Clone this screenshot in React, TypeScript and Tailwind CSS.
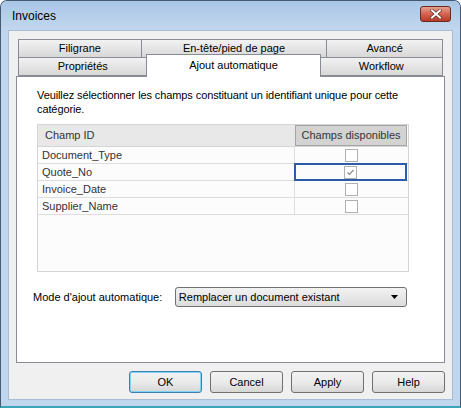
import { useState } from 'react';

const font = { fontFamily: '"Liberation Sans", Arial, sans-serif' };

const rows = ['Document_Type', 'Quote_No', 'Invoice_Date', 'Supplier_Name'];

function Tab({ label, w }: { label: string; w: string }) {
  return (
    <div
      className={`${w} h-[19px] flex items-center justify-center border border-[#898c95] bg-gradient-to-b from-[#f2f2f2] to-[#d8d8d8] text-[11px] text-black -ml-px first:ml-0`}
    >
      {label}
    </div>
  );
}

function Checkbox({ checked }: { checked: boolean }) {
  return (
    <div className="w-[13px] h-[13px] border border-[#b0b0b0] bg-white flex items-center justify-center">
      {checked && (
        <svg width="9" height="9" viewBox="0 0 9 9">
          <path d="M1.5 4.5 L3.5 6.5 L7.5 2" fill="none" stroke="#8a8a8a" strokeWidth="1.2" />
        </svg>
      )}
    </div>
  );
}

function Button({ label, primary }: { label: string; primary?: boolean }) {
  return (
    <button
      className={`w-[73px] h-[22px] rounded-[3px] border text-[11px] text-black bg-gradient-to-b from-[#f2f2f2] via-[#ebebeb] to-[#d6d6d6] ${
        primary ? 'border-[#3c7fb1] shadow-[inset_0_0_0_1px_#7fd3f5]' : 'border-[#707070]'
      }`}
    >
      {label}
    </button>
  );
}

export default function App() {
  const [selected] = useState(1);

  return (
    <div className="w-[461px] h-[408px] bg-[#c0d6ee] border border-[#45596f] border-b-2 border-b-[#3aa6b8] rounded-t-[7px] flex flex-col" style={font}>
      {/* Title bar */}
      <div className="h-[29px] flex items-center justify-between pl-[11px] pr-[9px] bg-gradient-to-b from-[#a9c6e6] to-[#c2d7ee] rounded-t-[6px]">
        <span className="text-[12px] text-black">Invoices</span>
        <div className="w-[31px] h-[16px] -mt-[3px] rounded-[3px] border border-[#6b2a22] bg-gradient-to-b from-[#e5a08c] via-[#d4634f] to-[#b73a27] flex items-center justify-center">
          <svg width="12" height="10" viewBox="0 0 12 10">
            <path d="M2 1.5 L10 8.5 M10 1.5 L2 8.5" stroke="#5a2b26" strokeWidth="3.4" strokeLinecap="square" />
            <path d="M2 1.5 L10 8.5 M10 1.5 L2 8.5" stroke="#ffffff" strokeWidth="2" strokeLinecap="square" />
          </svg>
        </div>
      </div>

      {/* Client area */}
      <div className="mx-[7px] h-[370px] bg-[#f0f0f0] border border-[#a8bdd4] flex flex-col">
        <div className="pt-[8px] px-[7px]">
          {/* Tabs */}
          <div className="px-[2px] flex">
            <Tab label="Filigrane" w="w-[124px]" />
            <Tab label="En-tête/pied de page" w="w-[187px]" />
            <Tab label="Avancé" w="w-[117px]" />
          </div>
          <div className="px-[2px] flex -mt-px items-end">
            <Tab label="Propriétés" w="w-[130px]" />
            <div className="relative z-10 w-[175px] h-[23px] -mb-px -mt-[3px] bg-white border border-b-0 border-[#898c95] text-[11px] text-black flex justify-center pt-[2px] -ml-px">
              Ajout automatique
            </div>
            <Tab label="Workflow" w="w-[124px]" />
          </div>

          {/* Panel */}
          <div className="h-[287px] bg-white border border-[#898c95] pl-[20px] pr-[37px] pt-[11px]">
            <p className="text-[11px] leading-[14px] text-black tracking-[-0.1px]">
              Veuillez sélectionner les champs constituant un identifiant unique pour cette catégorie.
            </p>

            <div className="mt-[8px] w-[372px] h-[148px] border border-[#d5d5d5] bg-[#fcfcfc]">
              <div className="flex h-[22px] border-b border-[#d5d5d5]">
                <div className="w-[257px] bg-[#e8e8e8] text-[11px] text-[#333] flex items-center pl-[7px]">Champ ID</div>
                <div className="w-[112px] bg-[#d3d3d3] border border-[#a5a5a5] text-[11px] text-[#333] flex items-center justify-center">
                  Champs disponibles
                </div>
              </div>
              {rows.map((r, i) => (
                <div key={r} className="flex h-[17px] border-b border-[#dedede]">
                  <div className="w-[257px] border-r border-[#dedede] text-[11px] text-[#333] flex items-center pl-[4px]">{r}</div>
                  <div
                    className={`w-[112px] flex items-center justify-center ${
                      i === selected ? 'border-2 border-[#2b5ca8] -my-px -ml-px w-[113px]' : ''
                    }`}
                  >
                    <Checkbox checked={i === selected} />
                  </div>
                </div>
              ))}
            </div>

            <div className="mt-[15px] -ml-[4px] flex items-center">
              <span className="w-[143px] text-[11px] text-black">Mode d'ajout automatique:</span>
              <div className="w-[234px] h-[20px] rounded-[3px] border border-[#707070] bg-gradient-to-b from-[#f2f2f2] to-[#dcdcdc] flex items-center justify-between pl-[3px] pr-[8px]">
                <span className="text-[11px] text-black">Remplacer un document existant</span>
                <svg width="7" height="4" viewBox="0 0 7 4">
                  <path d="M0 0 H7 L3.5 4 Z" fill="#000" />
                </svg>
              </div>
            </div>
          </div>
        </div>

        {/* Buttons */}
        <div className="flex justify-end gap-[8px] pr-[7px] mt-[8px]">
          <Button label="OK" primary />
          <Button label="Cancel" />
          <Button label="Apply" />
          <Button label="Help" />
        </div>
      </div>
      <div className="flex-1" />
    </div>
  );
}
